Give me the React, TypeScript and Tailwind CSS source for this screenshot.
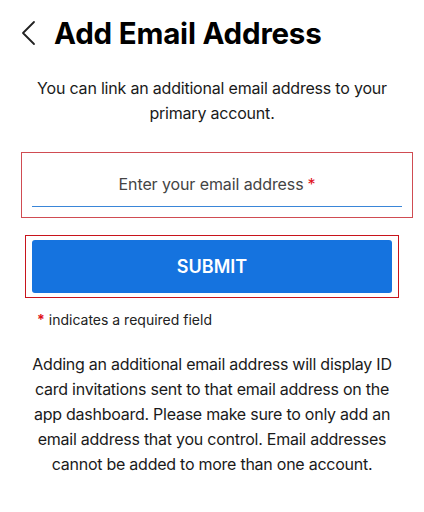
import React from 'react';

const App: React.FC = () => {
  return (
    <div className="min-h-screen w-full bg-white text-black" style={{ fontFamily: "Inter, 'Liberation Sans', sans-serif" }}>
      <header className="flex items-center pt-[14px] pl-[20px]">
        <svg width="18" height="26" viewBox="0 0 18 26" fill="none" stroke="#222" strokeWidth="1.8" strokeLinecap="round" strokeLinejoin="round">
          <path d="M14 2 L3 13 L14 24" />
        </svg>
        <h1 className="ml-[16px] text-[29.5px] leading-[38px] font-bold tracking-[-0.2px]">Add Email Address</h1>
      </header>

      <p className="mt-[24px] px-[30px] text-center text-[16px] leading-[25px] tracking-[-0.2px] text-[#1a1a1a]">
        You can link an additional email address to your primary account.
      </p>

      <div className="ml-[21px] mt-[26px] h-[66px] w-[392px] border border-[#d04c52] px-[10px] pt-[19px]">
        <div className="flex h-[35px] items-start justify-center border-b border-[#3a86d8] text-[16px] tracking-[-0.1px] text-[#444]">
          <span>Enter your email address</span>
          <span className="ml-[4px] text-[#e0101a]">*</span>
        </div>
      </div>

      <div className="mx-[25px] mt-[17px] border border-[#c8141c] px-[6px] py-[4px] w-[374px]">
        <button className="flex h-[53px] w-full items-center justify-center rounded-[3px] bg-[#1573df] text-[18px] font-semibold text-white">
          SUBMIT
        </button>
      </div>

      <p className="mt-[11px] pl-[37px] text-[14px] text-[#222]">
        <span className="text-[#e0101a] font-bold">*</span> indicates a required field
      </p>

      <p className="mt-[22px] px-[26px] text-center text-[16px] leading-[25px] tracking-[-0.25px] text-[#1a1a1a]">
        Adding an additional email address will display ID card invitations sent to that email address on the app dashboard. Please make sure to only add an email address that you control. Email addresses cannot be added to more than one account.
      </p>
    </div>
  );
};

export default App;
